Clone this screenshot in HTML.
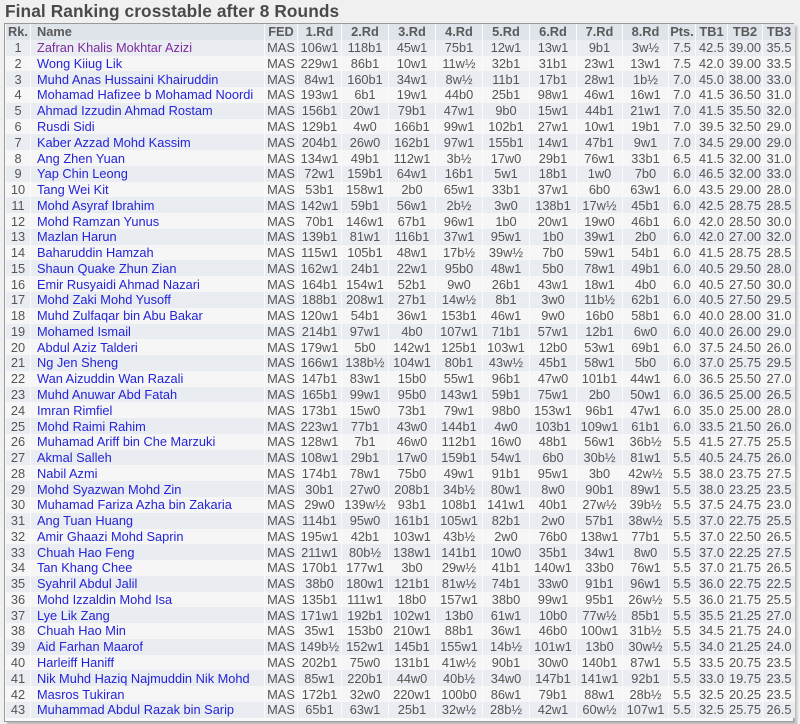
<!DOCTYPE html>
<html><head><meta charset="utf-8"><style>
body{margin:0;background:#f0f0f0;width:800px;height:724px;overflow:hidden;font-family:"Liberation Sans",Arial,sans-serif;}
h1{position:absolute;left:5px;top:1px;margin:0;font-size:17.3px;font-weight:bold;color:#4a4a4a;letter-spacing:0.1px}
.wrap{position:absolute;left:4px;top:23px;width:788px;height:697px;border:1px solid #999;background:#fafafa;box-shadow:3px 3px 2px #bbb}
table{border-collapse:separate;border-spacing:1px 0;table-layout:fixed;width:786px;margin-left:0;font-size:12.8px;color:#555}
td,th{padding:0;white-space:nowrap;overflow:hidden;text-align:center;height:15.77px;line-height:15px}
th{background:#dfe3ea;font-weight:bold;color:#5a5a5a}
th.n,td.n{text-align:left;padding-left:6px}
tr:nth-child(odd) td{background:#e9ecf1}
tr:nth-child(even) td{background:#f6f6f6}
td.n{color:#2424d8}
tr.v td.n{color:#7a2c9e}
</style></head><body>
<h1>Final Ranking crosstable after 8 Rounds</h1>
<div class="wrap"><table>
<colgroup><col style="width:24px"><col style="width:233px"><col style="width:32px"><col style="width:43px"><col style="width:46px"><col style="width:46px"><col style="width:46px"><col style="width:46px"><col style="width:46px"><col style="width:45px"><col style="width:45px"><col style="width:26px"><col style="width:31px"><col style="width:34px"><col style="width:32px"></colgroup>
<thead><tr><th>Rk.</th><th class="n">Name</th><th>FED</th><th>1.Rd</th><th>2.Rd</th><th>3.Rd</th><th>4.Rd</th><th>5.Rd</th><th>6.Rd</th><th>7.Rd</th><th>8.Rd</th><th>Pts.</th><th>TB1</th><th>TB2</th><th>TB3</th></tr></thead>
<tbody>
<tr class="v"><td>1</td><td class="n">Zafran Khalis Mokhtar Azizi</td><td>MAS</td><td>106w1</td><td>118b1</td><td>45w1</td><td>75b1</td><td>12w1</td><td>13w1</td><td>9b1</td><td>3w½</td><td>7.5</td><td>42.5</td><td>39.00</td><td>35.5</td></tr>
<tr><td>2</td><td class="n">Wong Kiiug Lik</td><td>MAS</td><td>229w1</td><td>86b1</td><td>10w1</td><td>11w½</td><td>32b1</td><td>31b1</td><td>23w1</td><td>13w1</td><td>7.5</td><td>42.0</td><td>39.00</td><td>33.5</td></tr>
<tr><td>3</td><td class="n">Muhd Anas Hussaini Khairuddin</td><td>MAS</td><td>84w1</td><td>160b1</td><td>34w1</td><td>8w½</td><td>11b1</td><td>17b1</td><td>28w1</td><td>1b½</td><td>7.0</td><td>45.0</td><td>38.00</td><td>33.0</td></tr>
<tr><td>4</td><td class="n">Mohamad Hafizee b Mohamad Noordi</td><td>MAS</td><td>193w1</td><td>6b1</td><td>19w1</td><td>44b0</td><td>25b1</td><td>98w1</td><td>46w1</td><td>16w1</td><td>7.0</td><td>41.5</td><td>36.50</td><td>31.0</td></tr>
<tr><td>5</td><td class="n">Ahmad Izzudin Ahmad Rostam</td><td>MAS</td><td>156b1</td><td>20w1</td><td>79b1</td><td>47w1</td><td>9b0</td><td>15w1</td><td>44b1</td><td>21w1</td><td>7.0</td><td>41.5</td><td>35.50</td><td>32.0</td></tr>
<tr><td>6</td><td class="n">Rusdi Sidi</td><td>MAS</td><td>129b1</td><td>4w0</td><td>166b1</td><td>99w1</td><td>102b1</td><td>27w1</td><td>10w1</td><td>19b1</td><td>7.0</td><td>39.5</td><td>32.50</td><td>29.0</td></tr>
<tr><td>7</td><td class="n">Kaber Azzad Mohd Kassim</td><td>MAS</td><td>204b1</td><td>26w0</td><td>162b1</td><td>97w1</td><td>155b1</td><td>14w1</td><td>47b1</td><td>9w1</td><td>7.0</td><td>34.5</td><td>29.00</td><td>29.0</td></tr>
<tr><td>8</td><td class="n">Ang Zhen Yuan</td><td>MAS</td><td>134w1</td><td>49b1</td><td>112w1</td><td>3b½</td><td>17w0</td><td>29b1</td><td>76w1</td><td>33b1</td><td>6.5</td><td>41.5</td><td>32.00</td><td>31.0</td></tr>
<tr><td>9</td><td class="n">Yap Chin Leong</td><td>MAS</td><td>72w1</td><td>159b1</td><td>64w1</td><td>16b1</td><td>5w1</td><td>18b1</td><td>1w0</td><td>7b0</td><td>6.0</td><td>46.5</td><td>32.00</td><td>33.0</td></tr>
<tr><td>10</td><td class="n">Tang Wei Kit</td><td>MAS</td><td>53b1</td><td>158w1</td><td>2b0</td><td>65w1</td><td>33b1</td><td>37w1</td><td>6b0</td><td>63w1</td><td>6.0</td><td>43.5</td><td>29.00</td><td>28.0</td></tr>
<tr><td>11</td><td class="n">Mohd Asyraf Ibrahim</td><td>MAS</td><td>142w1</td><td>59b1</td><td>56w1</td><td>2b½</td><td>3w0</td><td>138b1</td><td>17w½</td><td>45b1</td><td>6.0</td><td>42.5</td><td>28.75</td><td>28.5</td></tr>
<tr><td>12</td><td class="n">Mohd Ramzan Yunus</td><td>MAS</td><td>70b1</td><td>146w1</td><td>67b1</td><td>96w1</td><td>1b0</td><td>20w1</td><td>19w0</td><td>46b1</td><td>6.0</td><td>42.0</td><td>28.50</td><td>30.0</td></tr>
<tr><td>13</td><td class="n">Mazlan Harun</td><td>MAS</td><td>139b1</td><td>81w1</td><td>116b1</td><td>37w1</td><td>95w1</td><td>1b0</td><td>39w1</td><td>2b0</td><td>6.0</td><td>42.0</td><td>27.00</td><td>32.0</td></tr>
<tr><td>14</td><td class="n">Baharuddin Hamzah</td><td>MAS</td><td>115w1</td><td>105b1</td><td>48w1</td><td>17b½</td><td>39w½</td><td>7b0</td><td>59w1</td><td>54b1</td><td>6.0</td><td>41.5</td><td>28.75</td><td>28.5</td></tr>
<tr><td>15</td><td class="n">Shaun Quake Zhun Zian</td><td>MAS</td><td>162w1</td><td>24b1</td><td>22w1</td><td>95b0</td><td>48w1</td><td>5b0</td><td>78w1</td><td>49b1</td><td>6.0</td><td>40.5</td><td>29.50</td><td>28.0</td></tr>
<tr><td>16</td><td class="n">Emir Rusyaidi Ahmad Nazari</td><td>MAS</td><td>164b1</td><td>154w1</td><td>52b1</td><td>9w0</td><td>26b1</td><td>43w1</td><td>18w1</td><td>4b0</td><td>6.0</td><td>40.5</td><td>27.50</td><td>30.0</td></tr>
<tr><td>17</td><td class="n">Mohd Zaki Mohd Yusoff</td><td>MAS</td><td>188b1</td><td>208w1</td><td>27b1</td><td>14w½</td><td>8b1</td><td>3w0</td><td>11b½</td><td>62b1</td><td>6.0</td><td>40.5</td><td>27.50</td><td>29.5</td></tr>
<tr><td>18</td><td class="n">Muhd Zulfaqar bin Abu Bakar</td><td>MAS</td><td>120w1</td><td>54b1</td><td>36w1</td><td>153b1</td><td>46w1</td><td>9w0</td><td>16b0</td><td>58b1</td><td>6.0</td><td>40.0</td><td>28.00</td><td>31.0</td></tr>
<tr><td>19</td><td class="n">Mohamed Ismail</td><td>MAS</td><td>214b1</td><td>97w1</td><td>4b0</td><td>107w1</td><td>71b1</td><td>57w1</td><td>12b1</td><td>6w0</td><td>6.0</td><td>40.0</td><td>26.00</td><td>29.0</td></tr>
<tr><td>20</td><td class="n">Abdul Aziz Talderi</td><td>MAS</td><td>179w1</td><td>5b0</td><td>142w1</td><td>125b1</td><td>103w1</td><td>12b0</td><td>53w1</td><td>69b1</td><td>6.0</td><td>37.5</td><td>24.50</td><td>26.0</td></tr>
<tr><td>21</td><td class="n">Ng Jen Sheng</td><td>MAS</td><td>166w1</td><td>138b½</td><td>104w1</td><td>80b1</td><td>43w½</td><td>45b1</td><td>58w1</td><td>5b0</td><td>6.0</td><td>37.0</td><td>25.75</td><td>29.5</td></tr>
<tr><td>22</td><td class="n">Wan Aizuddin Wan Razali</td><td>MAS</td><td>147b1</td><td>83w1</td><td>15b0</td><td>55w1</td><td>96b1</td><td>47w0</td><td>101b1</td><td>44w1</td><td>6.0</td><td>36.5</td><td>25.50</td><td>27.0</td></tr>
<tr><td>23</td><td class="n">Muhd Anuwar Abd Fatah</td><td>MAS</td><td>165b1</td><td>99w1</td><td>95b0</td><td>143w1</td><td>59b1</td><td>75w1</td><td>2b0</td><td>50w1</td><td>6.0</td><td>36.5</td><td>25.00</td><td>26.5</td></tr>
<tr><td>24</td><td class="n">Imran Rimfiel</td><td>MAS</td><td>173b1</td><td>15w0</td><td>73b1</td><td>79w1</td><td>98b0</td><td>153w1</td><td>96b1</td><td>47w1</td><td>6.0</td><td>35.0</td><td>25.00</td><td>28.0</td></tr>
<tr><td>25</td><td class="n">Mohd Raimi Rahim</td><td>MAS</td><td>223w1</td><td>77b1</td><td>43w0</td><td>144b1</td><td>4w0</td><td>103b1</td><td>109w1</td><td>61b1</td><td>6.0</td><td>33.5</td><td>21.50</td><td>26.0</td></tr>
<tr><td>26</td><td class="n">Muhamad Ariff bin Che Marzuki</td><td>MAS</td><td>128w1</td><td>7b1</td><td>46w0</td><td>112b1</td><td>16w0</td><td>48b1</td><td>56w1</td><td>36b½</td><td>5.5</td><td>41.5</td><td>27.75</td><td>25.5</td></tr>
<tr><td>27</td><td class="n">Akmal Salleh</td><td>MAS</td><td>108w1</td><td>29b1</td><td>17w0</td><td>159b1</td><td>54w1</td><td>6b0</td><td>30b½</td><td>81w1</td><td>5.5</td><td>40.5</td><td>24.75</td><td>26.0</td></tr>
<tr><td>28</td><td class="n">Nabil Azmi</td><td>MAS</td><td>174b1</td><td>78w1</td><td>75b0</td><td>49w1</td><td>91b1</td><td>95w1</td><td>3b0</td><td>42w½</td><td>5.5</td><td>38.0</td><td>23.75</td><td>27.5</td></tr>
<tr><td>29</td><td class="n">Mohd Syazwan Mohd Zin</td><td>MAS</td><td>30b1</td><td>27w0</td><td>208b1</td><td>34b½</td><td>80w1</td><td>8w0</td><td>90b1</td><td>89w1</td><td>5.5</td><td>38.0</td><td>23.25</td><td>23.5</td></tr>
<tr><td>30</td><td class="n">Muhamad Fariza Azha bin Zakaria</td><td>MAS</td><td>29w0</td><td>139w½</td><td>93b1</td><td>108b1</td><td>141w1</td><td>40b1</td><td>27w½</td><td>39b½</td><td>5.5</td><td>37.5</td><td>24.75</td><td>23.0</td></tr>
<tr><td>31</td><td class="n">Ang Tuan Huang</td><td>MAS</td><td>114b1</td><td>95w0</td><td>161b1</td><td>105w1</td><td>82b1</td><td>2w0</td><td>57b1</td><td>38w½</td><td>5.5</td><td>37.0</td><td>22.75</td><td>25.5</td></tr>
<tr><td>32</td><td class="n">Amir Ghaazi Mohd Saprin</td><td>MAS</td><td>195w1</td><td>42b1</td><td>103w1</td><td>43b½</td><td>2w0</td><td>76b0</td><td>138w1</td><td>77b1</td><td>5.5</td><td>37.0</td><td>22.50</td><td>26.5</td></tr>
<tr><td>33</td><td class="n">Chuah Hao Feng</td><td>MAS</td><td>211w1</td><td>80b½</td><td>138w1</td><td>141b1</td><td>10w0</td><td>35b1</td><td>34w1</td><td>8w0</td><td>5.5</td><td>37.0</td><td>22.25</td><td>27.5</td></tr>
<tr><td>34</td><td class="n">Tan Khang Chee</td><td>MAS</td><td>170b1</td><td>177w1</td><td>3b0</td><td>29w½</td><td>41b1</td><td>140w1</td><td>33b0</td><td>76w1</td><td>5.5</td><td>37.0</td><td>21.75</td><td>26.5</td></tr>
<tr><td>35</td><td class="n">Syahril Abdul Jalil</td><td>MAS</td><td>38b0</td><td>180w1</td><td>121b1</td><td>81w½</td><td>74b1</td><td>33w0</td><td>91b1</td><td>96w1</td><td>5.5</td><td>36.0</td><td>22.75</td><td>22.5</td></tr>
<tr><td>36</td><td class="n">Mohd Izzaldin Mohd Isa</td><td>MAS</td><td>135b1</td><td>111w1</td><td>18b0</td><td>157w1</td><td>38b0</td><td>99w1</td><td>95b1</td><td>26w½</td><td>5.5</td><td>36.0</td><td>21.75</td><td>25.5</td></tr>
<tr><td>37</td><td class="n">Lye Lik Zang</td><td>MAS</td><td>171w1</td><td>192b1</td><td>102w1</td><td>13b0</td><td>61w1</td><td>10b0</td><td>77w½</td><td>85b1</td><td>5.5</td><td>35.5</td><td>21.25</td><td>27.0</td></tr>
<tr><td>38</td><td class="n">Chuah Hao Min</td><td>MAS</td><td>35w1</td><td>153b0</td><td>210w1</td><td>88b1</td><td>36w1</td><td>46b0</td><td>100w1</td><td>31b½</td><td>5.5</td><td>34.5</td><td>21.75</td><td>24.0</td></tr>
<tr><td>39</td><td class="n">Aid Farhan Maarof</td><td>MAS</td><td>149b½</td><td>152w1</td><td>145b1</td><td>155w1</td><td>14b½</td><td>101w1</td><td>13b0</td><td>30w½</td><td>5.5</td><td>34.0</td><td>21.25</td><td>24.0</td></tr>
<tr><td>40</td><td class="n">Harleiff Haniff</td><td>MAS</td><td>202b1</td><td>75w0</td><td>131b1</td><td>41w½</td><td>90b1</td><td>30w0</td><td>140b1</td><td>87w1</td><td>5.5</td><td>33.5</td><td>20.75</td><td>23.5</td></tr>
<tr><td>41</td><td class="n">Nik Muhd Haziq Najmuddin Nik Mohd</td><td>MAS</td><td>85w1</td><td>220b1</td><td>44w0</td><td>40b½</td><td>34w0</td><td>147b1</td><td>141w1</td><td>92b1</td><td>5.5</td><td>33.0</td><td>19.75</td><td>23.5</td></tr>
<tr><td>42</td><td class="n">Masros Tukiran</td><td>MAS</td><td>172b1</td><td>32w0</td><td>220w1</td><td>100b0</td><td>86w1</td><td>79b1</td><td>88w1</td><td>28b½</td><td>5.5</td><td>32.5</td><td>20.25</td><td>23.5</td></tr>
<tr><td>43</td><td class="n">Muhammad Abdul Razak bin Sarip</td><td>MAS</td><td>65b1</td><td>63w1</td><td>25b1</td><td>32w½</td><td>28b½</td><td>42w1</td><td>60w½</td><td>107w1</td><td>5.5</td><td>32.5</td><td>25.75</td><td>26.5</td></tr>
</tbody></table></div>
</body></html>
